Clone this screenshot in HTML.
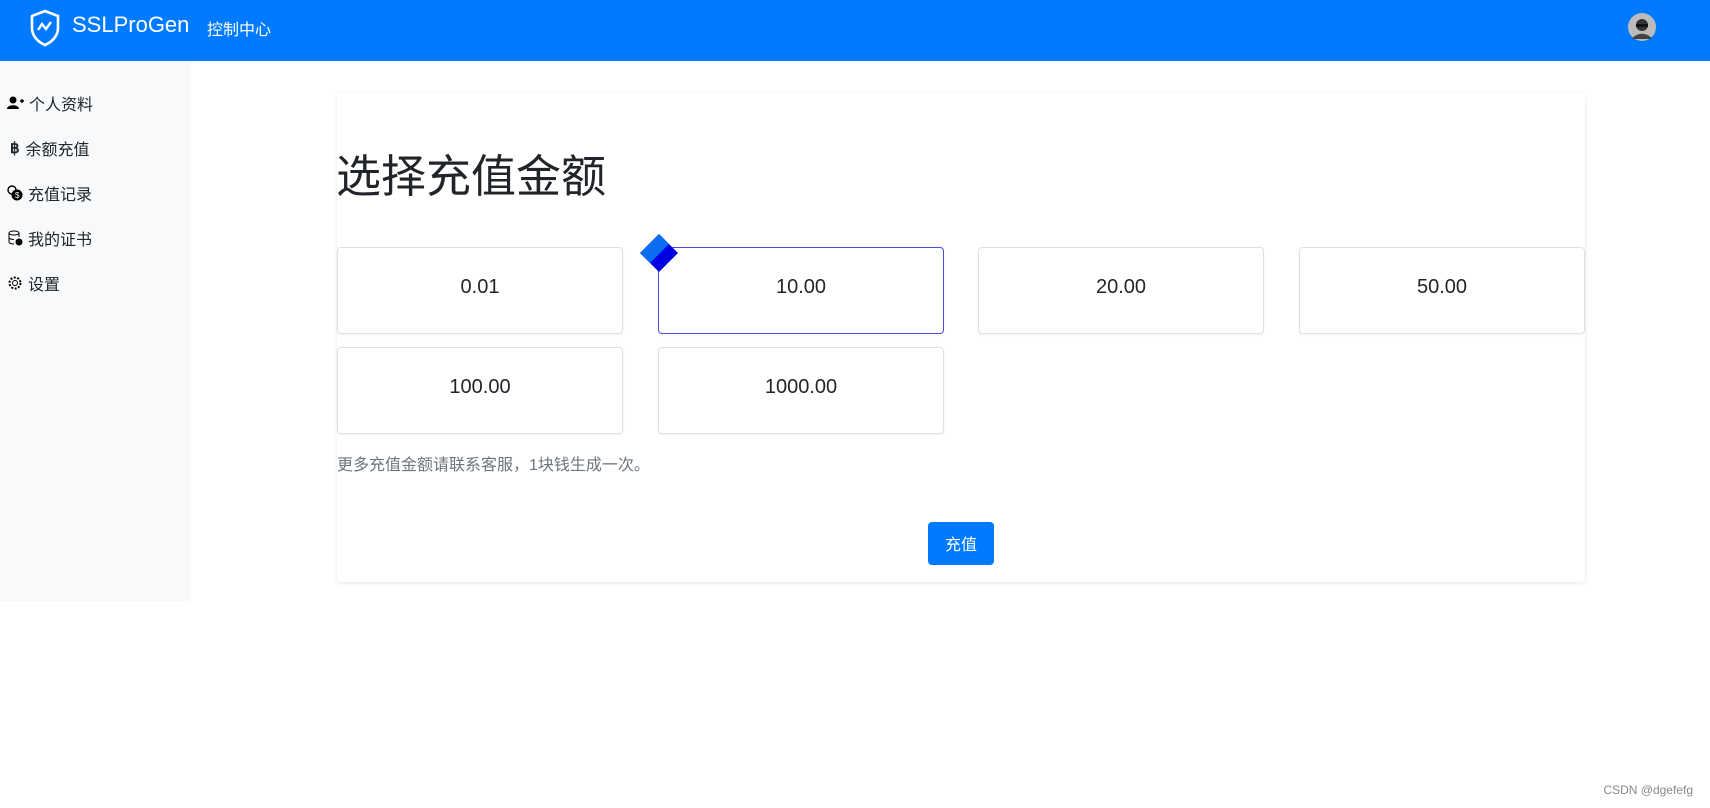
<!DOCTYPE html>
<html><head><meta charset="utf-8"><style>
*{box-sizing:border-box;margin:0;padding:0}
body{width:1710px;height:808px;background:#fff;font-family:"Liberation Sans","Noto Sans CJK SC",sans-serif;position:relative;overflow:hidden;color:#212529}
.nav{position:absolute;left:0;top:0;width:1710px;height:61px;background:#007bff}
.brand{position:absolute;left:72px;top:12px;color:#fff;font-size:22px}
.nl{position:absolute;left:207px;top:16px;color:#fff;font-size:16px}
.side{position:absolute;left:0;top:61px;width:191px;height:540px;background:#f8f9fa}
.si{position:absolute;left:7px;font-size:16px;color:#212529;display:flex;align-items:center}
.si svg{margin-right:5px}
.card{position:absolute;left:337px;top:93px;width:1248px;height:489px;background:#fff;box-shadow:0 1px 4px rgba(0,0,0,.1);border-radius:4px}
h1{position:absolute;left:336px;top:140px;font-size:45px;font-weight:400;color:#212529}
.b{position:absolute;width:286px;height:87px;border:1px solid #dee2e6;border-radius:4px;display:flex;align-items:center;justify-content:center;font-size:20px;font-weight:500;box-shadow:0 1px 2px rgba(0,0,0,.06);background:#fff;padding-bottom:6px}
.sel{border-color:#4d4dd9}
.note{position:absolute;left:337px;top:451px;font-size:16px;color:#6c757d}
.btn{position:absolute;left:928px;top:522px;width:66px;height:43px;background:#007bff;color:#fff;border-radius:4px;font-size:16px;display:flex;align-items:center;justify-content:center;padding-bottom:2px}
.wm{position:absolute;right:17px;top:783px;font-size:12px;color:#888}
</style></head><body>
<div class="nav">
<svg style="position:absolute;left:29px;top:9px" width="32" height="38" viewBox="0 0 32 38"><path d="M16 2 L29 7 V19 C29 27 23 33 16 36 C9 33 3 27 3 19 V7 Z" fill="none" stroke="#fff" stroke-width="2.6"/><path d="M9 21 L13 15 L17 20 L22 13" fill="none" stroke="#fff" stroke-width="2.4"/></svg>
<div class="brand">SSLProGen</div>
<div class="nl">控制中心</div>
<svg style="position:absolute;left:1628px;top:13px" width="28" height="28"><circle cx="14" cy="14" r="14" fill="#bbb"/><circle cx="14" cy="12" r="6" fill="#333"/><rect x="8" y="11" width="12" height="3" fill="#111"/><path d="M4 26 C8 19 20 19 24 26" fill="#444"/></svg>
</div>
<div class="side">
<div class="si" style="top:30px"><svg width="17" height="14" viewBox="0 0 17 14"><circle cx="6" cy="4" r="3.5"/><path d="M0 13 C0 8 12 8 12 13Z"/><path d="M13 5h4M15 3v4" stroke="#000" stroke-width="1.4"/></svg>个人资料</div>
<div class="si" style="top:75px"><span style="font-weight:700;font-size:15px;margin:0 6px 0 3px">฿</span>余额充值</div>
<div class="si" style="top:120px"><svg width="16" height="16" viewBox="0 0 16 16"><circle cx="5" cy="5" r="4" fill="none" stroke="#000" stroke-width="1.4"/><circle cx="10" cy="10" r="5.5"/><text x="8" y="13" font-size="8" fill="#fff">$</text></svg>充值记录</div>
<div class="si" style="top:165px"><svg width="16" height="16" viewBox="0 0 16 16"><ellipse cx="7" cy="3" rx="5" ry="2" fill="none" stroke="#000"/><path d="M2 3v9c0 1 2 2 5 2M12 3v4M2 7.5c0 1 2 2 5 2" fill="none" stroke="#000"/><circle cx="12" cy="12" r="3.5"/></svg>我的证书</div>
<div class="si" style="top:210px"><svg width="16" height="16" viewBox="0 0 16 16"><circle cx="8" cy="8" r="5.5" fill="none" stroke="#000" stroke-dasharray="2 1.5" stroke-width="2"/><circle cx="8" cy="8" r="2.5" fill="none" stroke="#000"/></svg>设置</div>
</div>
<div class="card"></div>
<h1>选择充值金额</h1>
<div class="b" style="left:337px;top:247px">0.01</div>
<div class="b sel" style="left:658px;top:247px">10.00</div>
<div class="b" style="left:978px;top:247px">20.00</div>
<div class="b" style="left:1299px;top:247px">50.00</div>
<div class="b" style="left:337px;top:347px">100.00</div>
<div class="b" style="left:658px;top:347px">1000.00</div>
<svg style="position:absolute;left:638px;top:233px" width="42" height="42" viewBox="0 0 42 42"><path d="M21 1 L40 20 L21 39 L2 20Z" fill="#0000e0"/><path d="M2 20 L21 1 L31 11 L12 30Z" fill="#0a6cf0"/></svg>
<div class="note">更多充值金额请联系客服，1块钱生成一次。</div>
<div class="btn">充值</div>
<div class="wm">CSDN @dgefefg</div>
</body></html>
